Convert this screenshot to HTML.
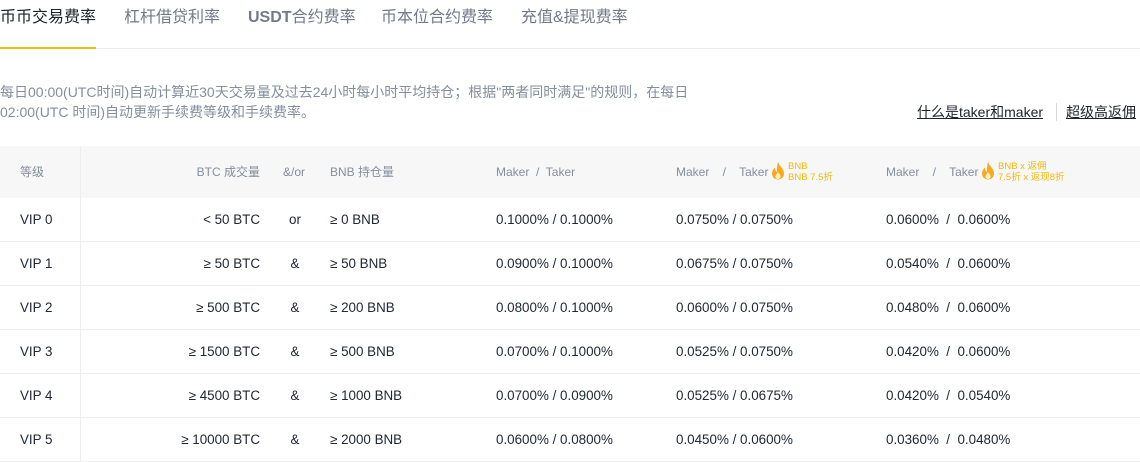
<!DOCTYPE html>
<html><head><meta charset="utf-8"><style>
*{margin:0;padding:0;box-sizing:border-box}
body{width:1140px;height:462px;overflow:hidden;background:#fff;font-family:"Liberation Sans","Noto Sans CJK SC",sans-serif;position:relative;color:#212833}
.a{position:absolute;white-space:nowrap}
.tab{top:7px;font-size:16px;color:#707a8a;line-height:22px}
.desc{left:0;font-size:14px;color:#848e9c;line-height:20px}
.hd{position:absolute;left:0;top:146px;width:1140px;height:52px;background:#f7f7f7}
.h{font-size:12px;color:#848e9c;line-height:16px;top:164px}
.row{position:absolute;left:0;width:1140px;height:44px;border-bottom:1px solid #eeeeee}
.c{position:absolute;top:13px;font-size:13.4px;line-height:18px;color:#212833;white-space:nowrap}
.vl{position:absolute;left:80px;top:146px;width:1px;height:316px;background:#eeeeee}
.y{font-size:9.5px;color:#f0b90b;line-height:11px}
</style></head><body>
<div class="a tab" style="left:0;color:#1e2329">币币交易费率</div>
<div class="a tab" style="left:124px">杠杆借贷利率</div>
<div class="a tab" style="left:248px;font-weight:bold">USDT<span style="font-weight:normal">合约费率</span></div>
<div class="a tab" style="left:381px">币本位合约费率</div>
<div class="a tab" style="left:521px">充值&amp;提现费率</div>
<div class="a" style="left:0;top:48px;width:1140px;height:1px;background:#eaecef"></div>
<div class="a" style="left:0;top:47px;width:96px;height:2px;background:#f0b90b"></div>
<div class="a desc" style="top:82px">每日00:00(UTC时间)自动计算近30天交易量及过去24小时每小时平均持仓；根据"两者同时满足"的规则，在每日</div>
<div class="a desc" style="top:102px">02:00(UTC 时间)自动更新手续费等级和手续费率。</div>
<div class="a" style="left:917px;top:103px;font-size:14px;line-height:18px;text-decoration:underline;color:#1e2329">什么是taker和maker</div>
<div class="a" style="left:1056px;top:103px;width:1px;height:18px;background:#d5d8dc"></div>
<div class="a" style="left:1066px;top:103px;font-size:14px;line-height:18px;text-decoration:underline;color:#1e2329">超级高返佣</div>
<div class="hd"></div>
<div class="a h" style="left:20px">等级</div>
<div class="a h" style="left:160px;width:100px;text-align:right">BTC 成交量</div>
<div class="a h" style="left:283px">&amp;/or</div>
<div class="a h" style="left:330px">BNB 持仓量</div>
<div class="a h" style="left:496px">Maker&nbsp; /&nbsp; Taker</div>
<div class="a h" style="left:676px">Maker&nbsp;&nbsp;&nbsp; /&nbsp;&nbsp;&nbsp; Taker</div>
<svg class="a" style="left:770px;top:162px" width="16" height="18" viewBox="0 0 16 18"><path d="M8 0C9 4 14 6 14 11.5C14 15 11.3 17.5 8 17.5C4.7 17.5 2 15 2 11.5C2 8.5 4 6.5 5 5.5C5 8 6 9.5 7 10C7 6 7 3 8 0Z" fill="#f8a91c"/><path d="M8 10C9 12 11 13 10.5 15C10 16.5 9 17 8 17C6.5 17 5.5 16 5.5 14.5C5.5 13 7 12 8 10Z" fill="#fff2c6"/></svg>
<div class="a y" style="left:788px;top:161px">BNB<br>BNB 7.5折</div>
<div class="a h" style="left:886px">Maker&nbsp;&nbsp;&nbsp; /&nbsp;&nbsp;&nbsp; Taker</div>
<svg class="a" style="left:980px;top:162px" width="16" height="18" viewBox="0 0 16 18"><path d="M8 0C9 4 14 6 14 11.5C14 15 11.3 17.5 8 17.5C4.7 17.5 2 15 2 11.5C2 8.5 4 6.5 5 5.5C5 8 6 9.5 7 10C7 6 7 3 8 0Z" fill="#f8a91c"/><path d="M8 10C9 12 11 13 10.5 15C10 16.5 9 17 8 17C6.5 17 5.5 16 5.5 14.5C5.5 13 7 12 8 10Z" fill="#fff2c6"/></svg>
<div class="a y" style="left:998px;top:161px">BNB x 返佣<br>7.5折 x 返现8折</div>

<div class="row" style="top:198px"><div class="c" style="left:20px">VIP 0</div><div class="c" style="left:140px;width:120px;text-align:right">&lt; 50 BTC</div><div class="c" style="left:280px;width:30px;text-align:center">or</div><div class="c" style="left:330px">≥ 0 BNB</div><div class="c" style="left:496px">0.1000% / 0.1000%</div><div class="c" style="left:676px">0.0750% / 0.0750%</div><div class="c" style="left:886px">0.0600% &nbsp;/ &nbsp;0.0600%</div></div>
<div class="row" style="top:242px"><div class="c" style="left:20px">VIP 1</div><div class="c" style="left:140px;width:120px;text-align:right">≥ 50 BTC</div><div class="c" style="left:280px;width:30px;text-align:center">&amp;</div><div class="c" style="left:330px">≥ 50 BNB</div><div class="c" style="left:496px">0.0900% / 0.1000%</div><div class="c" style="left:676px">0.0675% / 0.0750%</div><div class="c" style="left:886px">0.0540% &nbsp;/ &nbsp;0.0600%</div></div>
<div class="row" style="top:286px"><div class="c" style="left:20px">VIP 2</div><div class="c" style="left:140px;width:120px;text-align:right">≥ 500 BTC</div><div class="c" style="left:280px;width:30px;text-align:center">&amp;</div><div class="c" style="left:330px">≥ 200 BNB</div><div class="c" style="left:496px">0.0800% / 0.1000%</div><div class="c" style="left:676px">0.0600% / 0.0750%</div><div class="c" style="left:886px">0.0480% &nbsp;/ &nbsp;0.0600%</div></div>
<div class="row" style="top:330px"><div class="c" style="left:20px">VIP 3</div><div class="c" style="left:140px;width:120px;text-align:right">≥ 1500 BTC</div><div class="c" style="left:280px;width:30px;text-align:center">&amp;</div><div class="c" style="left:330px">≥ 500 BNB</div><div class="c" style="left:496px">0.0700% / 0.1000%</div><div class="c" style="left:676px">0.0525% / 0.0750%</div><div class="c" style="left:886px">0.0420% &nbsp;/ &nbsp;0.0600%</div></div>
<div class="row" style="top:374px"><div class="c" style="left:20px">VIP 4</div><div class="c" style="left:140px;width:120px;text-align:right">≥ 4500 BTC</div><div class="c" style="left:280px;width:30px;text-align:center">&amp;</div><div class="c" style="left:330px">≥ 1000 BNB</div><div class="c" style="left:496px">0.0700% / 0.0900%</div><div class="c" style="left:676px">0.0525% / 0.0675%</div><div class="c" style="left:886px">0.0420% &nbsp;/ &nbsp;0.0540%</div></div>
<div class="row" style="top:418px"><div class="c" style="left:20px">VIP 5</div><div class="c" style="left:140px;width:120px;text-align:right">≥ 10000 BTC</div><div class="c" style="left:280px;width:30px;text-align:center">&amp;</div><div class="c" style="left:330px">≥ 2000 BNB</div><div class="c" style="left:496px">0.0600% / 0.0800%</div><div class="c" style="left:676px">0.0450% / 0.0600%</div><div class="c" style="left:886px">0.0360% &nbsp;/ &nbsp;0.0480%</div></div>
<div class="vl"></div>
</body></html>
